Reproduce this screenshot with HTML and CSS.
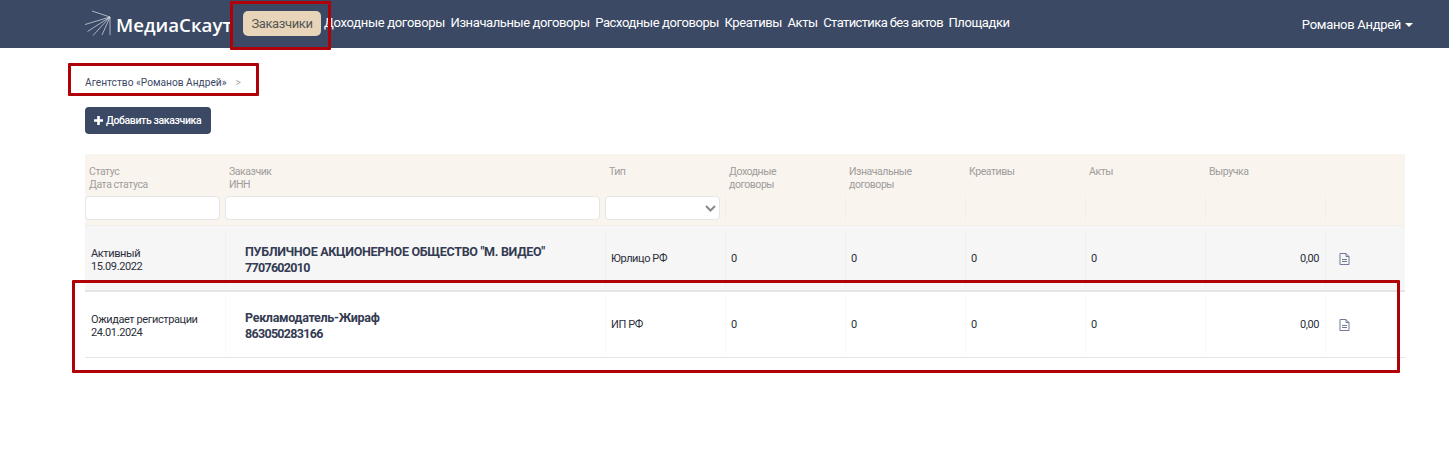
FILE: index.html
```html
<!DOCTYPE html>
<html lang="ru">
<head>
<meta charset="utf-8">
<title>МедиаСкаут</title>
<link rel="stylesheet" href="styles.css">
</head>
<body>
<header class="navbar">
  <a class="brand">
    <svg class="brand-icon" width="26" height="26" viewBox="0 0 26 26" fill="none" stroke="#dfe3ea" stroke-width="0.7">
      <path d="M25 7 7 1M25 7 0 14.500M25 7 2.500 21.500M25 7 8 25.500M25 7 17 25M25 7V25"/>
    </svg>
    <span>МедиаСкаут</span>
  </a>
  <nav class="nav-links">
    <a class="nav-link nav-active">Заказчики</a>
    <a class="nav-link nav-first">Доходные договоры</a>
    <a class="nav-link">Изначальные договоры</a>
    <a class="nav-link">Расходные договоры</a>
    <a class="nav-link">Креативы</a>
    <a class="nav-link">Акты</a>
    <a class="nav-link nav-tight">Статистика без актов</a>
    <a class="nav-link">Площадки</a>
  </nav>
  <a class="user">Романов Андрей<span class="caret"></span></a>
</header>
<main class="content">
  <div class="crumbs"><span>Агентство «Романов Андрей»</span><span class="crumb-sep">&gt;</span></div>
  <button class="add-btn"><svg width="9" height="9" viewBox="0 0 9 9"><path fill="#fff" d="M3.200 0h2.600v3.200H9v2.600H5.800V9H3.200V5.800H0V3.200h3.200z"/></svg>Добавить заказчика</button>
  <div class="table">
    <div class="row head">
      <div class="hcell">Статус<br>Дата статуса</div>
      <div class="hcell">Заказчик<br>ИНН</div>
      <div class="hcell">Тип</div>
      <div class="hcell">Доходные<br>договоры</div>
      <div class="hcell">Изначальные<br>договоры</div>
      <div class="hcell">Креативы</div>
      <div class="hcell">Акты</div>
      <div class="hcell">Выручка</div>
      <div class="hcell"></div>
    </div>
    <div class="row filters">
      <div class="fcell"><input class="field" type="text"></div>
      <div class="fcell"><input class="field" type="text"></div>
      <div class="fcell"><div class="field select"><svg width="11" height="7" viewBox="0 0 11 7" fill="none" stroke="#8a8a8a" stroke-width="2"><path d="M1 1l4.500 4.500L10 1"/></svg></div></div>
      <div class="fcell line"></div>
      <div class="fcell line"></div>
      <div class="fcell line"></div>
      <div class="fcell line"></div>
      <div class="fcell line"></div>
      <div class="fcell line"></div>
    </div>
    <div class="row item odd">
      <div class="cell status">Активный<br>15.09.2022</div>
      <div class="cell line name">ПУБЛИЧНОЕ АКЦИОНЕРНОЕ ОБЩЕСТВО "М. ВИДЕО"<br><span class="inn">7707602010</span></div>
      <div class="cell line">Юрлицо РФ</div>
      <div class="cell line">0</div>
      <div class="cell line">0</div>
      <div class="cell line">0</div>
      <div class="cell line">0</div>
      <div class="cell line num">0,00</div>
      <div class="cell line"><svg class="doc" width="11" height="12" viewBox="0 0 11 12" fill="none" stroke="#6f7996"><path d="M1 .5h6l3 3v8H1zM7 .5v3h3M3 6.500h5M3 8.500h5"/></svg></div>
    </div>
    <div class="row item">
      <div class="cell status">Ожидает регистрации<br>24.01.2024</div>
      <div class="cell line name">Рекламодатель-Жираф<br><span class="inn">863050283166</span></div>
      <div class="cell line">ИП РФ</div>
      <div class="cell line">0</div>
      <div class="cell line">0</div>
      <div class="cell line">0</div>
      <div class="cell line">0</div>
      <div class="cell line num">0,00</div>
      <div class="cell line"><svg class="doc" width="11" height="12" viewBox="0 0 11 12" fill="none" stroke="#6f7996"><path d="M1 .5h6l3 3v8H1zM7 .5v3h3M3 6.500h5M3 8.500h5"/></svg></div>
    </div>
  </div>
</main>
<div class="mark mark-nav"></div>
<div class="mark mark-crumbs"></div>
<div class="mark mark-row"></div>
</body>
</html>
```
FILE: styles.css
```css
* { box-sizing: border-box; }
html, body { margin: 0; padding: 0; }
body {
  position: relative;
  height: 467px;
  overflow: hidden;
  background: #fff;
  font-family: "Roboto", "Liberation Sans", sans-serif;
  color: #2b2f3a;
}
.navbar {
  display: flex;
  align-items: center;
  height: 48px;
  padding: 0 36px 0 85px;
  background: #3b4965;
}
.brand {
  display: flex;
  align-items: center;
  gap: 5px;
  width: 158px;
  color: #fff;
  font-family: "Open Sans", sans-serif;
  font-size: 18.700px;
  font-weight: 600;
  white-space: nowrap;
}
.brand-icon { flex: none; margin-top: -3px; }
.nav-links { display: flex; align-items: center; gap: 5.500px; margin-bottom: 1px; }
.nav-link {
  margin-bottom: 2px;
  color: #fff;
  font-size: 13px;
  letter-spacing: -0.4px;
  white-space: nowrap;
}
.nav-first { letter-spacing: -0.3px; }
.nav-tight { letter-spacing: -0.62px; }
.nav-active {
  display: block;
  width: 78px;
  height: 25px;
  margin: 0 -2.500px 0 0;
  line-height: 25px;
  text-align: center;
  background: #e8d5b9;
  border-radius: 5px;
  color: #555;
}
.user { margin-left: auto; color: #fff; font-size: 13px; letter-spacing: -0.3px; white-space: nowrap; }
.caret {
  display: inline-block;
  margin-left: 4px;
  vertical-align: 2px;
  border-top: 4px solid #fff;
  border-left: 4px solid transparent;
  border-right: 4px solid transparent;
}
.content { padding: 0 44px 0 85px; }
.crumbs {
  display: flex;
  gap: 9px;
  height: 59px;
  padding-top: 28px;
  font-size: 10.200px;
  line-height: 13px;
  color: #3b4965;
}
.crumb-sep { color: #a5a5a5; }
.add-btn {
  display: flex;
  align-items: center;
  gap: 3px;
  width: 126px;
  height: 27px;
  padding: 0 0 0 9px;
  border: 0;
  border-radius: 4px;
  background: #3b4965;
  color: #fff;
  font-family: inherit;
  font-size: 10.500px;
  font-weight: 500;
  letter-spacing: -0.38px;
  white-space: nowrap;
}
.table { margin-top: 20px; }
.row {
  display: grid;
  grid-template-columns: 140px 380px repeat(5, 120px) 120px 80px;
}
.head { height: 42px; background: #f9f4ee; }
.hcell {
  padding: 11px 4px 0;
  font-size: 10.500px;
  letter-spacing: -0.45px;
  line-height: 13px;
  color: #a09c9c;
}
.filters { height: 30px; padding-bottom: 6px; background: #f9f4ee; border-bottom: 1px solid #f2efec; }
.fcell { padding-right: 5px; }
.line { border-left: 1px solid rgba(0, 0, 0, 0.025); }
.field {
  display: block;
  width: 100%;
  height: 24px;
  margin: 0;
  padding: 0;
  background: #fff;
  border: 1px solid #e6e6e6;
  border-radius: 4px;
}
.select { display: flex; align-items: center; justify-content: flex-end; padding-right: 3px; }
.item { height: 66px; padding: 4px 0 2px; background: #fff; border-bottom: 1px solid #e5e5e5; }
.odd { background: #f6f6f6; border-bottom: 2px solid #e5e5e5; }
.cell {
  padding: 22px 5px 0;
  font-size: 11px;
  letter-spacing: -0.4px;
  line-height: 13px;
  color: #2b2f3a;
}
.status { padding: 17px 6px 0; }
.name { padding: 14px 0 0 19px; font-size: 12.500px; letter-spacing: -0.3px; line-height: 16px; font-weight: 700; color: #343b52; white-space: nowrap; }
.inn { letter-spacing: -0.7px; }
.num { padding-right: 6px; text-align: right; }
.doc { display: block; margin: 1px 0 0 8px; }
.mark { position: absolute; border: 3px solid #b00008; border-radius: 1px; pointer-events: none; }
.mark-nav { left: 230px; top: 1px; width: 101px; height: 49px; }
.mark-crumbs { left: 68px; top: 63px; width: 191px; height: 33px; }
.mark-row { left: 72px; top: 280px; width: 1328px; height: 93px; }
```
